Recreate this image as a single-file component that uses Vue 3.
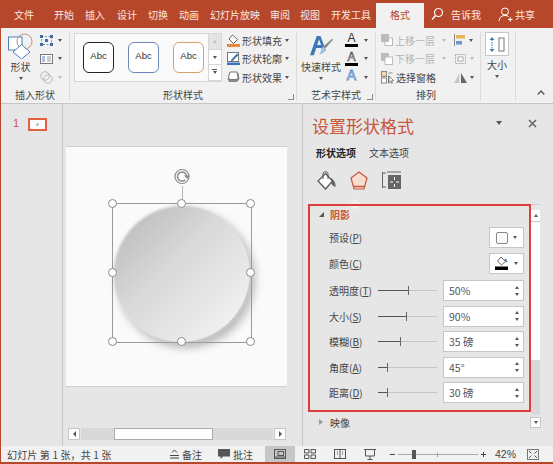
<script setup>
const tabs = [
  { name: '开始', w: 31 },
  { name: '插入', w: 32 },
  { name: '设计', w: 31 },
  { name: '切换', w: 31 },
  { name: '动画', w: 31 },
  { name: '幻灯片放映', w: 60 },
  { name: '审阅', w: 30 },
  { name: '视图', w: 31 },
  { name: '开发工具', w: 45 }
]

const styles = [
  { id: 'dark', color: '#222' },
  { id: 'blue', color: '#6f87b8' },
  { id: 'orange', color: '#d8a06c' }
]

const sliders = [
  { label: '透明度', key: 'T', value: '50%', pos: 51 },
  { label: '大小', key: 'S', value: '90%', pos: 47 },
  { label: '模糊', key: 'B', value: '35 磅', pos: 37 },
  { label: '角度', key: 'A', value: '45°', pos: 15 },
  { label: '距离', key: 'D', value: '30 磅', pos: 16 }
]

const handles = [
  [0, 0], [50, 0], [100, 0],
  [0, 50], [100, 50],
  [0, 100], [50, 100], [100, 100]
]
</script>

<template>
  <div class="app">
    <!-- вкладки -->
    <div class="tabs">
      <span class="file">文件</span>
      <span v-for="t in tabs" :key="t.name" class="tab" :style="{ width: t.w + 'px' }">{{ t.name }}</span>
      <span class="tab-active">格式</span>
      <svg class="ico-search" width="13" height="14" viewBox="0 0 13 14">
        <circle cx="7.5" cy="5.5" r="4" fill="none" stroke="#fff" stroke-width="1.2" />
        <path d="M4.6 8.5L1 12.5" stroke="#fff" stroke-width="1.4" />
      </svg>
      <span class="tell">告诉我</span>
      <svg class="ico-person" width="15" height="15" viewBox="0 0 15 15">
        <circle cx="7" cy="4.5" r="3.5" fill="none" stroke="#fff" />
        <path d="M1 14c.3-3.5 2.5-5.5 6-5.5 1.5 0 2.6.4 3.5 1M10 12.5h4.5M12.2 10.2v4.6" fill="none" stroke="#fff" />
      </svg>
      <span class="share">共享</span>
    </div>

    <!-- лента -->
    <div class="ribbon">
      <div class="group g-insert">
        <div class="g-body">
          <div class="big-btn shape-btn">
            <svg width="25" height="26" viewBox="0 0 25 26">
              <rect x=".5" y="4" width="13.500" height="13" fill="#fff" stroke="#4d7fb5" />
              <circle cx="16.500" cy="8.500" r="7.500" fill="none" stroke="#b98d86" />
              <path d="M13.500 11.500L22 19l-8.500 7L5 19z" fill="#fff" stroke="#4d7fb5" />
            </svg>
            <span>形状</span>
            <i class="caret"></i>
          </div>
          <div class="mini-col">
            <div class="mini-row">
              <svg width="13" height="11" viewBox="0 0 13 11">
                <rect x="1.5" y="1.5" width="10" height="8" fill="none" stroke="#7a93b5" stroke-dasharray="2 1.5" />
                <path d="M0 0h3v3H0zM10 0h3v3h-3zM0 8h3v3H0zM10 8h3v3h-3zM5 4h3v3H5z" fill="#3f6ea5" />
              </svg>
              <i class="caret"></i>
            </div>
            <div class="mini-row">
              <svg width="13" height="10" viewBox="0 0 13 10">
                <rect x=".5" y=".5" width="12" height="9" fill="#fff" stroke="#777" />
                <path d="M2 3h3M2 5h3M2 7h3" stroke="#4d7fb5" />
                <path d="M7 3h4M7 5h4M7 7h4" stroke="#999" />
              </svg>
              <i class="caret"></i>
            </div>
            <div class="mini-row off">
              <svg width="13" height="13" viewBox="0 0 13 13">
                <circle cx="5" cy="5" r="4.3" fill="none" stroke="#bbb" />
                <circle cx="8" cy="8" r="4.3" fill="none" stroke="#bbb" />
              </svg>
              <i class="caret light"></i>
            </div>
          </div>
        </div>
        <div class="g-label">插入形状</div>
      </div>

      <div class="group g-style">
        <div class="g-body">
          <div class="gallery">
            <div class="gallery-items">
              <div v-for="s in styles" :key="s.id" class="abc" :style="{ borderColor: s.color }">Abc</div>
            </div>
            <div class="gallery-scroll">
              <span class="g-up"><i class="caret up light"></i></span>
              <span><i class="caret"></i></span>
              <span class="g-more"><i class="caret"></i></span>
            </div>
          </div>
          <div class="style-cmds">
            <div class="cmd">
              <svg width="13" height="13" viewBox="0 0 13 13">
                <path d="M5.5 1l5 4.5-4 4-4.500-4.500z" fill="#fff" stroke="#666" />
                <rect x="0" y="10" width="13" height="3" fill="#e8883a" />
              </svg>
              <span>形状填充</span><i class="caret"></i>
            </div>
            <div class="cmd">
              <svg width="13" height="13" viewBox="0 0 13 13">
                <rect x=".5" y=".5" width="11" height="9" fill="#fff" stroke="#777" />
                <path d="M4 8l6-6.500 1.500 1.500-6 6H4z" fill="#3f6ea5" />
                <rect x="0" y="10.500" width="13" height="2.500" fill="#3b6fc0" />
              </svg>
              <span>形状轮廓</span><i class="caret"></i>
            </div>
            <div class="cmd">
              <svg width="13" height="12" viewBox="0 0 13 12">
                <path d="M3.500 2h8l1 6-2.500 3H2L.5 8z" fill="#8a8a8a" />
                <path d="M3 1h7l1 5.500-1.500 2H2.500L1.500 6z" fill="#fff" stroke="#777" />
              </svg>
              <span>形状效果</span><i class="caret"></i>
            </div>
          </div>
        </div>
        <div class="g-label">形状样式</div>
        <i class="launcher"></i>
      </div>

      <div class="group g-art">
        <div class="g-body">
          <div class="big-btn art-btn">
            <svg width="23" height="23" viewBox="0 0 24 24">
              <path d="M0 21L7 1h4l5.500 15-3 2-1.500-4.500H6.500L4 21zM7.500 10.500h4L9.400 4.500z" fill="#3f78b5" />
              <path d="M23 4l1 1-8 9-2-2z" fill="#888" />
              <path d="M14 12l2 2c-.5 4-3 6-6.500 6 2-1.500 1.500-6 4.500-8z" fill="#9cc3e6" />
            </svg>
            <span>快速样式</span>
            <i class="caret"></i>
          </div>
          <div class="mini-col art-mini">
            <div class="mini-row">
              <span class="font-a"><b>A</b><em></em></span>
              <i class="caret"></i>
            </div>
            <div class="mini-row">
              <span class="font-a outline"><b>A</b><em></em></span>
              <i class="caret"></i>
            </div>
            <div class="mini-row">
              <span class="font-a glow"><b>A</b></span>
              <i class="caret"></i>
            </div>
          </div>
        </div>
        <div class="g-label">艺术字样式</div>
        <i class="launcher"></i>
      </div>

      <div class="group g-arrange">
        <div class="g-body">
          <div class="arrange-col">
            <div class="cmd off">
              <svg width="12" height="12" viewBox="0 0 12 12">
                <rect x="4" y="4" width="7.500" height="7.500" fill="#fff" stroke="#bbb" />
                <rect x="0" y="0" width="8" height="8" fill="#bbb" />
              </svg>
              <span>上移一层</span><i class="caret light"></i>
            </div>
            <div class="cmd off">
              <svg width="12" height="12" viewBox="0 0 12 12">
                <rect x="0" y="0" width="8" height="8" fill="#bbb" />
                <rect x="4" y="4" width="7.500" height="7.500" fill="#fff" stroke="#bbb" />
              </svg>
              <span>下移一层</span><i class="caret light"></i>
            </div>
            <div class="cmd">
              <svg width="13" height="13" viewBox="0 0 13 13">
                <rect x=".5" y=".5" width="5" height="5" fill="#f3d9a8" stroke="#888" />
                <rect x=".5" y="7" width="5" height="5" fill="#fff" stroke="#888" />
                <path d="M7.500 2h4M7.500 4.500v8" stroke="#888" />
                <path d="M8 5l4.500 4.500-2 .3 1 2.200-1 .5-1-2.200L8 11.500z" fill="#fff" stroke="#555" stroke-width=".7" />
              </svg>
              <span>选择窗格</span>
            </div>
          </div>
          <div class="mini-col arrange-mini">
            <div class="mini-row">
              <svg width="12" height="12" viewBox="0 0 12 12">
                <path d="M.5 0v12" stroke="#888" />
                <rect x="2" y="1" width="9" height="3.500" fill="#e8b45a" />
                <rect x="2" y="7" width="6" height="3.500" fill="#6f98c8" />
              </svg>
              <i class="caret"></i>
            </div>
            <div class="mini-row off">
              <svg width="13" height="12" viewBox="0 0 13 12">
                <rect x="1.500" y="1.500" width="10" height="9" fill="none" stroke="#aaa" stroke-dasharray="2 1" />
                <rect x="4" y="4" width="5" height="4" fill="#fff" stroke="#aaa" />
              </svg>
              <i class="caret light"></i>
            </div>
            <div class="mini-row">
              <svg width="13" height="11" viewBox="0 0 13 11">
                <path d="M5.500 1v10H0z" fill="#c9c9c9" />
                <path d="M7 1v10h6z" fill="#666" />
              </svg>
              <i class="caret"></i>
            </div>
          </div>
        </div>
        <div class="g-label arrange-label">排列</div>
      </div>

      <div class="group g-size">
        <div class="g-body">
          <div class="big-btn size-btn">
            <div class="size-box">
              <svg width="18" height="15" viewBox="0 0 18 15">
                <path d="M4 2.500v10" stroke="#3f6ea5" stroke-dasharray="1.500 1" />
                <path d="M1.500 3L4 0l2.500 3zM1.500 12L4 15l2.500-3z" fill="#3f78b5" />
                <rect x="11" y="1" width="5" height="13" fill="#fff" stroke="#777" />
              </svg>
            </div>
            <span>大小</span>
            <i class="caret"></i>
          </div>
        </div>
      </div>

      <div class="collapse">
        <svg width="8" height="5" viewBox="0 0 8 5"><path d="M.7 4.500L4 1l3.300 3.500" fill="none" stroke="#555" stroke-width="1.300" /></svg>
      </div>
    </div>

    <div class="main">
      <!-- миниатюры -->
      <div class="thumbs">
        <span class="thumb-num">1</span>
        <div class="thumb"><i></i></div>
      </div>

      <!-- холст -->
      <div class="canvas">
        <div class="slide">
          <div class="circle"></div>
          <div class="selection">
            <i class="rot-line"></i>
            <svg class="rot" width="20" height="17" viewBox="0 0 20 17">
              <circle cx="8" cy="8.500" r="7" fill="#fff" stroke="#8a8a8a" stroke-width="1.200" />
              <path d="M12.500 8.500a4.500 4.500 0 1 0-1.300 3.200" fill="none" stroke="#8a8a8a" stroke-width="1.500" />
              <path d="M10 7.500h6l-3 3.500z" fill="#8a8a8a" />
            </svg>
            <i
              v-for="h in handles"
              :key="h.join()"
              class="handle"
              :style="{ left: h[0] + '%', top: h[1] + '%' }"
            ></i>
          </div>
        </div>
        <div class="hscroll">
          <span class="sb-btn"><i class="tri-left"></i></span>
          <div class="sb-track"><div class="sb-thumb"></div></div>
          <span class="sb-btn"><i class="tri-right"></i></span>
        </div>
      </div>

      <!-- панель формата -->
      <div class="pane">
        <div class="pane-head">
          <span class="pane-title">设置形状格式</span>
          <i class="caret pane-menu"></i>
          <svg class="pane-close" width="9" height="9" viewBox="0 0 9 9"><path d="M1 1l7 7M8 1L1 8" stroke="#666" stroke-width="1.600" /></svg>
        </div>
        <div class="pane-tabs">
          <span class="on">形状选项</span>
          <span>文本选项</span>
        </div>
        <div class="pane-icons">
          <svg width="19" height="19" viewBox="0 0 19 19">
            <path d="M14 7c3 2 5 5 4.500 9-2.500-.5-4-2.500-5-5z" fill="#666" />
            <path d="M8.500 2.500l7 7.500-7 8L1 10z" fill="#fff" stroke="#555" stroke-width="1.200" />
            <path d="M6 8V3c0-3 5-3 5 0v5" fill="none" stroke="#555" />
          </svg>
          <svg width="18" height="19" viewBox="0 0 18 19">
            <path d="M9 1l8 6-3 11H4L1 7z" fill="#f7dcd2" stroke="#c8553a" stroke-width="1.200" />
            <path d="M4 15.500h10" stroke="#c8553a" stroke-width="1.500" />
          </svg>
          <svg width="19" height="18" viewBox="0 0 19 18">
            <path d="M.5 1v16M0 2h4M0 16h4M5 1h14" stroke="#666" fill="none" />
            <rect x="6" y="4" width="13" height="14" fill="#666" />
            <path d="M12.500 6v3M12.500 13v3M8 11h3M14 11h3" stroke="#fff" />
          </svg>
          <i class="pane-notch"></i>
        </div>

        <div class="pane-body">
          <div class="pane-scroll">
            <div class="panel">
              <div class="sec-head"><i class="tri-open"></i><span>阴影</span></div>
              <div class="row preset">
                <span class="lbl">预设(<u>P</u>)</span>
                <div class="pick">
                  <i class="pick-sq"></i>
                  <i class="caret"></i>
                </div>
              </div>
              <div class="row preset">
                <span class="lbl">颜色(<u>C</u>)</span>
                <div class="pick">
                  <svg width="14" height="14" viewBox="0 0 14 14">
                    <path d="M6 1l4.500 4.500-4 3.500-4-4z" fill="#fff" stroke="#666" />
                    <path d="M10 3l2 3" stroke="#3f78b5" stroke-width="1.500" />
                    <rect x="0" y="10.500" width="13" height="3.500" fill="#000" />
                  </svg>
                  <i class="caret"></i>
                </div>
              </div>
              <div v-for="s in sliders" :key="s.key" class="row">
                <span class="lbl">{{ s.label }}(<u>{{ s.key }}</u>)</span>
                <div class="slider">
                  <i class="fill" :style="{ width: s.pos + '%' }"></i>
                  <i class="knob" :style="{ left: s.pos + '%' }"></i>
                </div>
                <div class="spin">
                  <span>{{ s.value }}</span>
                  <div class="spin-btns"><i class="caret up"></i><i class="caret"></i></div>
                </div>
              </div>
            </div>
            <div class="vbar">
              <span class="vbar-up"><i class="caret up"></i></span>
            </div>
          </div>
          <div class="sec-closed">
            <i class="tri-closed"></i>
            <span>映像</span>
            <span class="vbar-down"><i class="caret"></i></span>
          </div>
        </div>
      </div>
    </div>

    <!-- статус -->
    <div class="status">
      <span class="st-text">幻灯片 第 1 张，共 1 张</span>
      <div class="st-item notes">
        <svg width="9" height="10" viewBox="0 0 9 10"><path d="M2 3.500L4.500 1 7 3.500M0 6.500h9M0 9h9" fill="none" stroke="#444" /></svg>
        <span>备注</span>
      </div>
      <div class="st-item comments">
        <svg width="12" height="12" viewBox="0 0 12 12"><path d="M0 1h12v7.500H5L2.500 11V8.500H0z" fill="#555" /></svg>
        <span>批注</span>
      </div>
      <div class="st-view active">
        <svg width="12" height="10" viewBox="0 0 12 10"><rect x=".5" y=".5" width="11" height="9" fill="none" stroke="#555" /><rect x="4" y="2.500" width="5.500" height="4" fill="none" stroke="#555" /><path d="M.5 8h11" stroke="#555" /></svg>
      </div>
      <div class="st-view">
        <svg width="12" height="10" viewBox="0 0 12 10"><path d="M.5.500h4.500v3.500H.5zM7 .500h4.500v3.500H7zM.5 6h4.500v3.500H.5zM7 6h4.500v3.500H7z" fill="none" stroke="#555" /></svg>
      </div>
      <div class="st-view">
        <svg width="12" height="10" viewBox="0 0 12 10"><rect x=".5" y=".5" width="11" height="9" fill="none" stroke="#555" /><path d="M6 .5v9M3 3h1M3 5h1M8 3h1M8 5h1" stroke="#555" /></svg>
      </div>
      <div class="st-view">
        <svg width="12" height="11" viewBox="0 0 12 11"><path d="M0 .5h12M1.500 1v6h9V1M6 7v3M3.500 10.500h5" fill="none" stroke="#555" /></svg>
      </div>
      <span class="zoom-minus"></span>
      <div class="zoom-track"><i class="tick"></i><i class="zoom-knob"></i></div>
      <span class="zoom-plus"></span>
      <span class="zoom-val">42%</span>
      <svg class="fit" width="12" height="11" viewBox="0 0 12 11">
        <rect x=".5" y=".5" width="11" height="10" fill="none" stroke="#777" />
        <path d="M2 2l2.500 2.500M10 2L7.500 4.500M2 9l2.500-2.500M10 9L7.500 6.500" stroke="#555" />
      </svg>
    </div>
  </div>
</template>

<style scoped>
.app {
  width: 553px;
  height: 464px;
  box-sizing: border-box;
  display: flex;
  flex-direction: column;
  background: #e6e6e6;
  border-left: 1px solid #b7472a;
  border-bottom: 2px solid #b7472a;
  font-family: "Noto Sans CJK SC", "Liberation Sans", sans-serif;
  font-size: 10px;
  color: #444;
  overflow: hidden;
}

i {
  display: block;
  font-style: normal;
}

svg {
  flex-shrink: 0;
}

.caret {
  width: 0;
  height: 0;
  border-left: 2.5px solid transparent;
  border-right: 2.5px solid transparent;
  border-top: 3px solid #555;
  flex-shrink: 0;
}

.caret.up {
  border-top: 0;
  border-bottom: 3px solid #555;
}

.caret.light {
  border-top-color: #bbb;
}

.caret.up.light {
  border-bottom-color: #bbb;
}

/* Вкладки */
.tabs {
  height: 28px;
  flex-shrink: 0;
  display: flex;
  align-items: center;
  background: #b7472a;
  color: #fbe9e3;
  font-size: 10px;
}

.file {
  margin-left: 13px;
  width: 40px;
}

.tab {
  flex-shrink: 0;
  white-space: nowrap;
}

.tab-active {
  align-self: flex-end;
  width: 48px;
  height: 25px;
  line-height: 24px;
  text-align: center;
  background: #f1f1f1;
  color: #b7472a;
}

.ico-search {
  margin-left: 7px;
}

.tell {
  margin-left: 7px;
}

.ico-person {
  margin-left: 17px;
}

.share {
  margin-left: 2px;
}

/* Лента */
.ribbon {
  position: relative;
  height: 76px;
  flex-shrink: 0;
  display: flex;
  padding-top: 4px;
  box-sizing: border-box;
  background: #f1f1f1;
  border-bottom: 1px solid #c6c6c6;
}

.group {
  position: relative;
  display: flex;
  flex-direction: column;
  box-sizing: border-box;
  height: 68px;
  border-right: 1px solid #dadada;
}

.g-body {
  flex: none;
  height: 56px;
  display: flex;
}

.g-label {
  height: 15px;
  line-height: 14px;
  text-align: center;
  color: #444;
}

.launcher {
  position: absolute;
  right: 2px;
  bottom: 0;
  width: 5px;
  height: 5px;
  border-left: 1px solid #888;
  border-bottom: 1px solid #888;
  transform: rotate(-90deg);
}

.g-insert {
  width: 69px;
}

.g-style {
  width: 227px;
}

.g-art {
  width: 79px;
}

.g-arrange {
  width: 105px;
}

.g-size {
  width: 35px;
}

.big-btn {
  display: flex;
  flex-direction: column;
  align-items: center;
}

.big-btn span {
  line-height: 14px;
  white-space: nowrap;
}

.shape-btn {
  width: 39px;
  padding-top: 1px;
}

.shape-btn span {
  margin-top: 1px;
}

.shape-btn .caret {
  margin-top: 3px;
}

.mini-col {
  display: flex;
  flex-direction: column;
  gap: 4.5px;
  padding-top: 1px;
}

.mini-row {
  display: flex;
  align-items: center;
  gap: 5px;
  height: 14px;
}

.gallery {
  width: 148px;
  height: 49px;
  margin-left: 4px;
  margin-top: 1px;
  box-sizing: border-box;
  display: flex;
  background: #fafafa;
  border: 1px solid #d6d6d6;
}

.gallery-items {
  flex: 1;
  display: flex;
  gap: 14px;
  padding: 8px 0 0 8px;
}

.abc {
  width: 31px;
  height: 31px;
  box-sizing: border-box;
  border: 1px solid;
  border-radius: 6px;
  background: #fff;
  text-align: center;
  line-height: 25px;
  font-family: "Liberation Sans", sans-serif;
  font-size: 9.5px;
  color: #333;
}

.gallery-scroll {
  width: 12px;
  display: flex;
  flex-direction: column;
  border-left: 1px solid #d6d6d6;
}

.gallery-scroll span {
  flex: 1;
  display: flex;
  align-items: center;
  justify-content: center;
  background: #fff;
  border-bottom: 1px solid #d6d6d6;
}

.gallery-scroll .g-up {
  background: #e4e4e4;
}

.g-more {
  position: relative;
}

.g-more::before {
  content: "";
  position: absolute;
  top: 4px;
  left: 3px;
  width: 5px;
  height: 1px;
  background: #555;
}

.style-cmds {
  display: flex;
  flex-direction: column;
  gap: 4.5px;
  margin-left: 5px;
  padding-top: 1px;
}

.cmd {
  display: flex;
  align-items: center;
  height: 14px;
  white-space: nowrap;
}

.cmd span {
  margin: 0 3px 0 2px;
}

.off {
  color: #b5b5b5;
}

.art-btn {
  width: 48px;
  padding-top: 3px;
}

.art-btn span {
  margin-top: 2px;
}

.art-btn .caret {
  margin-top: 3px;
}

.art-mini .mini-row {
  gap: 6px;
}

.font-a {
  width: 13px;
  height: 14px;
  position: relative;
  font-family: "Liberation Sans", sans-serif;
  text-align: center;
  font-size: 12px;
  line-height: 11px;
  color: #333;
}

.font-a b {
  font-weight: 400;
}

.font-a em {
  position: absolute;
  left: 0;
  right: 0;
  bottom: 0;
  height: 3px;
  background: #000;
}

.font-a.outline b {
  color: #f1f1f1;
  -webkit-text-stroke: .6px #444;
}

.font-a.glow b {
  color: #fff;
  -webkit-text-stroke: .8px #5b8fc9;
  font-size: 14px;
}

.arrange-col {
  width: 78px;
  display: flex;
  flex-direction: column;
  gap: 4.5px;
  padding: 1px 0 0 5px;
  box-sizing: border-box;
}

.arrange-col .cmd span {
  margin-right: 7px;
}

.arrange-mini .mini-row {
  gap: 3px;
}

.arrange-label {
  padding-right: 4px;
}

.size-btn {
  width: 32px;
}

.size-box {
  width: 24px;
  height: 24px;
  box-sizing: border-box;
  display: flex;
  align-items: center;
  justify-content: center;
  background: #fff;
  border: 1px solid #c6c6c6;
  margin-bottom: 2px;
}

.size-btn .caret {
  margin-top: 3px;
}

.collapse {
  position: absolute;
  right: 8px;
  bottom: 5px;
}

/* Основная область */
.main {
  flex: 1;
  min-height: 0;
  display: flex;
}

.thumbs {
  width: 62px;
  flex-shrink: 0;
  box-sizing: border-box;
  display: flex;
  align-items: flex-start;
  padding: 14px 0 0 12px;
  gap: 9px;
  border-right: 1px solid #c6c6c6;
}

.thumb-num {
  font-family: "Liberation Sans", sans-serif;
  font-size: 11px;
  line-height: 11px;
  color: #c8553a;
}

.thumb {
  width: 19px;
  height: 13px;
  box-sizing: border-box;
  border: 2px solid #e2603f;
  background: #fafafa;
  display: flex;
  align-items: center;
  justify-content: center;
}

.thumb i {
  width: 3px;
  height: 3px;
  border-radius: 50%;
  background: #bbb;
}

.canvas {
  width: 239px;
  flex-shrink: 0;
  display: flex;
  flex-direction: column;
  padding: 42px 0 0 3px;
  box-sizing: border-box;
}

.slide {
  position: relative;
  width: 221px;
  height: 241px;
  box-sizing: border-box;
  background: #fafafa;
  border-top: 1px solid #cfcfcf;
  border-bottom: 1px solid #cfcfcf;
}

.circle {
  position: absolute;
  left: 47px;
  top: 58px;
  width: 138px;
  height: 138px;
  border-radius: 50%;
  background: linear-gradient(135deg, #bfbfbf 12%, #d8d8d8 42%, #f0f0f0 85%);
  box-shadow:
    inset 1px 1px 2px #efefef,
    inset -1px -1px 1px #bdbdbd,
    4px 5px 9px rgba(0, 0, 0, .26);
}

.selection {
  position: absolute;
  left: 46px;
  top: 56px;
  width: 140px;
  height: 140px;
  box-sizing: border-box;
  border: 1px solid #9a9a9a;
}

.rot-line {
  position: absolute;
  left: 69px;
  top: -18px;
  width: 1px;
  height: 18px;
  background: #b5b5b5;
}

.rot {
  position: absolute;
  left: 61px;
  top: -36px;
}

.handle {
  position: absolute;
  width: 9px;
  height: 9px;
  margin: -5px 0 0 -5px;
  border: 1px solid #8a8a8a;
  border-radius: 50%;
  background: #fff;
  box-sizing: border-box;
}

.hscroll {
  height: 13px;
  width: 218px;
  margin: 41px 0 0 2px;
  display: flex;
}

.sb-btn {
  width: 12px;
  height: 12px;
  box-sizing: border-box;
  display: flex;
  align-items: center;
  justify-content: center;
  background: #fff;
  border: 1px solid #c6c6c6;
}

.tri-left,
.tri-right {
  width: 0;
  height: 0;
  border-top: 3px solid transparent;
  border-bottom: 3px solid transparent;
}

.tri-left {
  border-right: 3px solid #555;
}

.tri-right {
  border-left: 3px solid #555;
}

.sb-track {
  flex: 1;
  height: 12px;
  margin: 0 1px;
  padding-left: 33px;
  background: #d9d9d9;
}

.sb-thumb {
  width: 99px;
  height: 12px;
  box-sizing: border-box;
  background: #fff;
  border: 1px solid #ababab;
}

/* Панель */
.pane {
  flex: 1;
  min-width: 0;
  box-sizing: border-box;
  border-left: 1px solid #c6c6c6;
  position: relative;
}

.pane-head {
  height: 32px;
  display: flex;
  align-items: center;
  padding: 12px 0 0 9px;
  box-sizing: border-box;
}

.pane-title {
  width: 184px;
  font-size: 17px;
  line-height: 24px;
  color: #c8553a;
}

.pane-menu {
  border-left-width: 3.5px;
  border-right-width: 3.5px;
  border-top-width: 4px;
  margin-top: -6px;
}

.pane-close {
  margin: -6px 0 0 26px;
}

.pane-tabs {
  display: flex;
  gap: 13px;
  padding: 9px 0 0 13px;
  height: 24px;
  line-height: 15px;
  box-sizing: border-box;
}

.pane-tabs .on {
  color: #222;
  font-weight: 700;
}

.pane-icons {
  position: relative;
  display: flex;
  gap: 14px;
  align-items: center;
  height: 44px;
  padding: 0 0 4px 14px;
  box-sizing: border-box;
}

.pane-notch {
  position: absolute;
  left: 48px;
  bottom: 0;
  width: 8px;
  height: 8px;
  background: #f0f0f0;
  transform: rotate(45deg) translate(3px, 3px);
}

.pane-scroll {
  display: flex;
  margin-left: 5px;
  align-items: flex-start;
}

.panel {
  width: 223px;
  height: 208px;
  box-sizing: border-box;
  border: 2px solid #e03c3c;
  padding: 0 5px 0 19px;
  display: flex;
  flex-direction: column;
  gap: 4.5px;
  position: relative;
}

.sec-head {
  display: flex;
  align-items: center;
  height: 16.5px;
  flex-shrink: 0;
  color: #c8553a;
  font-weight: 700;
}

.sec-head span {
  margin-left: 6px;
}

.tri-open {
  margin-left: -10px;
  width: 0;
  height: 0;
  border-left: 5px solid transparent;
  border-bottom: 5px solid #555;
}

.row {
  display: flex;
  align-items: center;
  height: 21px;
  flex-shrink: 0;
}

.row.preset {
  justify-content: space-between;
}

.preset + .preset {
  margin-bottom: 2px;
}

.lbl {
  width: 49px;
  flex-shrink: 0;
  white-space: nowrap;
  color: #444;
}

.pick {
  width: 35px;
  height: 21px;
  box-sizing: border-box;
  display: flex;
  align-items: center;
  justify-content: center;
  gap: 5px;
  background: #fff;
  border: 1px solid #c6c6c6;
}

.pick-sq {
  width: 12px;
  height: 12px;
  box-sizing: border-box;
  border: 1px solid #888;
  border-radius: 2px;
  background: #fafafa;
}

.slider {
  position: relative;
  width: 59px;
  height: 1px;
  background: #c6c6c6;
  flex-shrink: 0;
}

.slider .fill {
  position: absolute;
  left: 0;
  top: 0;
  height: 1px;
  background: #555;
}

.slider .knob {
  position: absolute;
  top: -4px;
  width: 1px;
  height: 9px;
  background: #666;
}

.spin {
  width: 82px;
  height: 21px;
  margin-left: 6px;
  box-sizing: border-box;
  display: flex;
  align-items: center;
  justify-content: space-between;
  padding: 0 4px 0 5px;
  background: #fff;
  border: 1px solid #c6c6c6;
  color: #555;
  font-size: 10.5px;
}

.spin-btns {
  display: flex;
  flex-direction: column;
  gap: 4px;
}

.vbar {
  width: 9px;
  height: 150px;
  margin-top: 6px;
  background: #fff;
  position: relative;
}

.vbar::before {
  content: "";
  position: absolute;
  left: 0;
  top: -6px;
  width: 9px;
  height: 1px;
  background: #d0d0d0;
}

.vbar::after {
  content: "";
  position: absolute;
  left: 0;
  top: 150px;
  width: 9px;
  height: 55px;
  background: #d9d9d9;
}

.vbar-up {
  display: flex;
  justify-content: center;
  align-items: center;
  height: 11px;
  background: #fff;
  border-bottom: 1px solid #c6c6c6;
}

.sec-closed {
  display: flex;
  align-items: center;
  height: 20px;
  margin-left: 16px;
  color: #444;
}

.tri-closed {
  width: 0;
  height: 0;
  border-top: 3.5px solid transparent;
  border-bottom: 3.5px solid transparent;
  border-left: 4px solid #999;
  margin-right: 7px;
}

.vbar-down {
  margin-left: 180px;
  width: 11px;
  height: 11px;
  box-sizing: border-box;
  display: flex;
  align-items: center;
  justify-content: center;
  background: #fff;
  border: 1px solid #c6c6c6;
}

/* Статус */
.status {
  height: 16px;
  flex-shrink: 0;
  display: flex;
  align-items: center;
  background: #f1f1f1;
  color: #444;
}

.st-text {
  width: 169px;
  padding-left: 6px;
  box-sizing: border-box;
  white-space: nowrap;
  letter-spacing: .15px;
}

.st-item {
  display: flex;
  align-items: center;
  gap: 3px;
}

.notes {
  width: 48px;
}

.comments {
  width: 47px;
}

.st-view {
  width: 30px;
  height: 16px;
  display: flex;
  align-items: center;
  justify-content: center;
}

.st-view.active {
  background: #c6c6c6;
}

.zoom-minus {
  width: 5px;
  height: 1px;
  margin-left: 5px;
  background: #444;
}

.zoom-track {
  position: relative;
  width: 80px;
  height: 1px;
  margin-left: 3px;
  background: #aaa;
}

.zoom-track .tick {
  position: absolute;
  left: 39px;
  top: -2px;
  width: 1px;
  height: 5px;
  background: #aaa;
}

.zoom-knob {
  position: absolute;
  left: 14px;
  top: -4px;
  width: 4px;
  height: 9px;
  background: #555;
}

.zoom-plus {
  position: relative;
  width: 5px;
  height: 1px;
  margin-left: 3px;
  background: #444;
}

.zoom-plus::after {
  content: "";
  position: absolute;
  left: 2px;
  top: -2px;
  width: 1px;
  height: 5px;
  background: #444;
}

.zoom-val {
  margin-left: 9px;
  font-family: "Liberation Sans", sans-serif;
  font-size: 10.5px;
}

.fit {
  margin-left: 11px;
}
</style>
